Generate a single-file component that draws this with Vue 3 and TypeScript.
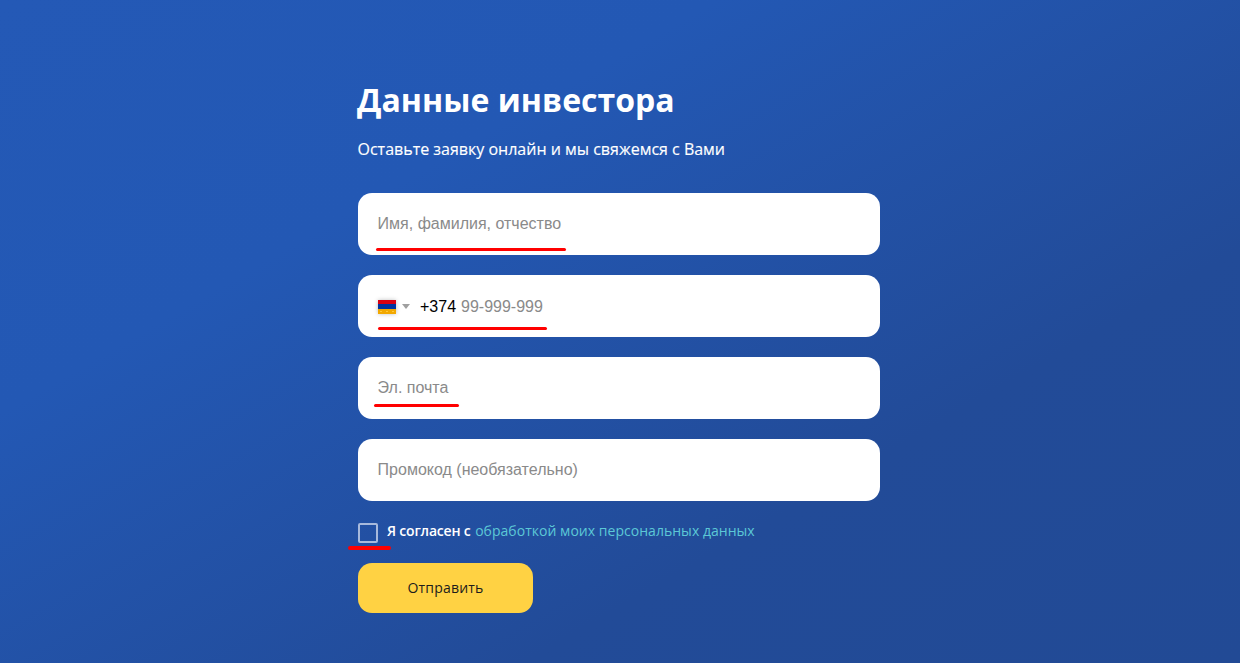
<script setup lang="ts">
const fields: string[] = ['Эл. почта', 'Промокод (необязательно)']
</script>

<template>
  <main class="page">
    <form class="form" @submit.prevent>
      <h1 class="title">Данные инвестора</h1>
      <p class="lead">Оставьте заявку онлайн и мы свяжемся с Вами</p>

      <div class="field">
        <input class="input" type="text" placeholder="Имя, фамилия, отчество" />
        <span class="mark mark-name"></span>
      </div>

      <div class="field phone">
        <span class="flag"><i class="red"></i><i class="blue"></i><i class="orange"></i></span>
        <span class="caret"></span>
        <span class="code">+374</span>
        <input class="input phone-input" type="tel" placeholder="99-999-999" />
        <span class="mark mark-phone"></span>
      </div>

      <div v-for="(f, i) in fields" :key="f" class="field">
        <input class="input" type="text" :placeholder="f" />
        <span v-if="i === 0" class="mark mark-mail"></span>
      </div>

      <label class="agree">
        <span class="box"></span>
        <span class="agree-text"><span class="agree-lead">Я согласен с</span> <a class="link">обработкой моих персональных данных</a></span>
        <span class="mark mark-box"></span>
      </label>

      <button class="submit" type="submit">Отправить</button>
    </form>
  </main>
</template>

<style>
body { margin: 0; }
</style>

<style scoped>
.page {
  height: 663px;
  overflow: hidden;
  box-sizing: border-box;
  padding: 78px 0 0 358px;
  background: linear-gradient(150deg, #2459b6 0%, #2358b4 30%, #224b98 70%, #224a95 100%);
  font-family: "Open Sans", sans-serif;
}
.form { width: 522px; display: flex; flex-direction: column; }
.title {
  margin: 0 0 0 -1px;
  font-size: 32px;
  line-height: 44px;
  font-weight: 700;
  letter-spacing: 0.02px;
  color: #fff;
}
.lead {
  margin: 16px 0 0 -0.5px;
  font-size: 16px;
  line-height: 22px;
  font-weight: 500;
  -webkit-text-stroke: 0.15px #fff;
  color: #fff;
}
.field {
  position: relative;
  height: 62px;
  margin-top: 20px;
  background: #fff;
  border-radius: 14px;
  display: flex;
  align-items: center;
}
.lead + .field { margin-top: 33px; }
.input {
  flex: 1;
  min-width: 0;
  height: 100%;
  box-sizing: border-box;
  padding: 0 20px 0 19.6px;
  border: 0;
  outline: 0;
  background: transparent;
  font: 16px/20px "Liberation Sans", sans-serif;
  color: #000;
}
.input::placeholder { color: #8a8a8a; opacity: 1; }
.phone { padding-left: 20px; }
.flag {
  width: 18px;
  height: 14px;
  margin-top: 1px;
  display: flex;
  flex-direction: column;
  box-shadow: 0 0 4px rgba(0, 0, 0, 0.25);
}
.flag i { flex: 1; }
.red { background: #d90012; }
.blue { background: #0033a0; }
.orange {
  background: radial-gradient(circle, #ffc93a 0.6px, transparent 1px) 0 0 / 6px 100% #f2a800;
}
.caret {
  width: 0;
  height: 0;
  margin-left: 6px;
  border-left: 4px solid transparent;
  border-right: 4px solid transparent;
  border-top: 5px solid #a0a0a0;
}
.code {
  margin-left: 10px;
  padding-top: 2px;
  font: 16px/20px "Liberation Sans", sans-serif;
  color: #000;
}
.phone-input { padding: 2px 0 0 5px; }
.mark {
  position: absolute;
  height: 3px;
  border-radius: 2px;
  background: #f00;
}
.mark-name { left: 18px; top: 55px; width: 190px; }
.mark-phone { left: 20px; top: 52px; width: 169px; }
.mark-mail { left: 16px; top: 47px; width: 85px; }
.mark-box { left: -10px; top: 23px; width: 43px; height: 4px; }
.agree {
  position: relative;
  margin-top: 22px;
  height: 20px;
  display: flex;
  align-items: center;
  gap: 9px;
}
.box {
  width: 20px;
  height: 20px;
  box-sizing: border-box;
  border: 2px solid #a7b9dc;
  border-radius: 2px;
}
.agree-text {
  position: relative;
  top: -2px;
  font-size: 14px;
  line-height: 20px;
  font-weight: 600;
  color: #fff;
}
.agree-lead { letter-spacing: -0.2px; margin-right: 1px; }
.link { font-weight: 500; letter-spacing: 0.03px; color: #5cc8d6; }
.submit {
  width: 175px;
  height: 50px;
  margin-top: 20px;
  padding: 0 0 2px;
  border: 0;
  border-radius: 14px;
  background: #ffd243;
  font-family: "Open Sans", sans-serif;
  font-size: 14px;
  font-weight: 500;
  letter-spacing: 0.2px;
  color: #1c1c1c;
}
</style>
